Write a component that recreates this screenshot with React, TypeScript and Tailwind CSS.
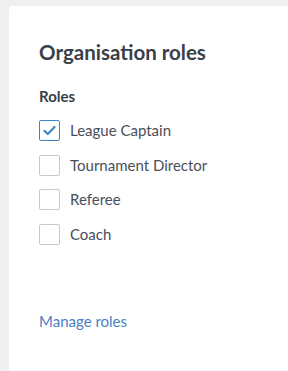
const roles = [
  { name: 'League Captain', checked: true },
  { name: 'Tournament Director', checked: false },
  { name: 'Referee', checked: false },
  { name: 'Coach', checked: false },
]

function Checkbox({ checked }: { checked: boolean }) {
  return (
    <span
      className={[
        'flex h-[21px] w-[21px] shrink-0 items-center justify-center rounded-[2px] border bg-white',
        checked ? 'border-[#3d86c6]' : 'border-[#c8c8c8]',
      ].join(' ')}
    >
      {checked && (
        <svg width="13" height="11" viewBox="0 0 13 11" fill="none">
          <path d="M1.5 5.8 L4.8 9 L11.5 2" stroke="#3d86c6" strokeWidth="2.2" strokeLinecap="round" strokeLinejoin="round" />
        </svg>
      )}
    </span>
  )
}

export default function App() {
  return (
    <div className="h-[371px] w-[288px] overflow-hidden bg-[#efefef] pl-[9px] pt-[6px] font-['Lato','Noto_Sans',sans-serif]">
      <div className="flex h-full flex-col rounded-tl-[3px] bg-white pl-[30px] pt-[33px]">
        <h2 className="text-[20.5px] font-bold leading-[26px] text-[#3a4049]">Organisation roles</h2>
        <div className="mt-[21px] text-[15px] font-bold leading-[20px] text-[#3a4049]">Roles</div>
        <ul className="mt-[14px] flex flex-col gap-[13.6px]">
          {roles.map((r) => (
            <li key={r.name} className="flex h-[21px] items-center gap-[10px]">
              <Checkbox checked={r.checked} />
              <span className="text-[15px] leading-[21px] text-[#4a505a]">{r.name}</span>
            </li>
          ))}
        </ul>
        <a href="#" className="mt-[66px] self-start text-[15px] leading-[20px] text-[#4a80c4]">
          Manage roles
        </a>
      </div>
    </div>
  )
}
